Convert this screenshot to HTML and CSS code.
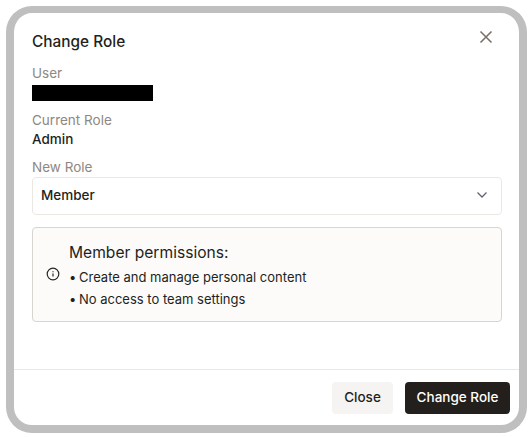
FILE: index.html
```html
<!DOCTYPE html>
<html lang="en">
<head>
  <meta charset="UTF-8">
  <title>Change Role</title>
  <link rel="stylesheet" href="styles.css">
</head>
<body>

<div class="dialog">
  <div class="dialog-body">
    <div class="dialog-head">
      <h2>Change Role</h2>
      <svg class="close-icon" width="16" height="16" viewBox="0 0 16 16" fill="none" stroke="#7a716a" stroke-width="1.6">
        <path d="M2.5 2.5l11 11M13.5 2.5l-11 11"/>
      </svg>
    </div>

    <div class="label">User</div>
    <div class="redacted"></div>

    <div class="label label-role">Current Role</div>
    <div class="value">Admin</div>

    <div class="label label-new">New Role</div>
    <div class="select">
      <span>Member</span>
      <svg width="12" height="8" viewBox="0 0 12 8" fill="none" stroke="#5f6472" stroke-width="1.3">
        <path d="M1.5 1.5L6 6l4.5-4.5"/>
      </svg>
    </div>

    <div class="info">
      <svg class="info-icon" width="14" height="14" viewBox="0 0 14 14" fill="none" stroke="#2a2522" stroke-width="1.2">
        <circle cx="7" cy="7" r="5.8"/>
        <path d="M7 6.4v3.2M7 4.2v1.1"/>
      </svg>
      <div>
        <div class="info-title">Member permissions:</div>
        <div class="info-line"><span class="bullet">•</span> Create and manage personal content</div>
        <div class="info-line"><span class="bullet">•</span> No access to team settings</div>
      </div>
    </div>
  </div>

  <div class="dialog-foot">
    <button class="btn btn-light">Close</button>
    <button class="btn btn-dark">Change Role</button>
  </div>
</div>

</body>
</html>
```

FILE: styles.css
```css
* {
  box-sizing: border-box;
}

body {
  margin: 0;
  padding: 6px 4px 4px 6px;
  background-color: #fff;
  color: #231f1c;
  font-family: Inter, "Liberation Sans", sans-serif;
}

.dialog {
  width: 521px;
  height: 427px;
  border: 8px solid #bfbfbf;
  border-top-width: 7px;
  border-radius: 26px;
  background-color: #fff;
  display: flex;
  flex-direction: column;
}

.dialog-body {
  flex: 1;
  padding: 0 17px 0 18px;
}

.dialog-head {
  display: flex;
  justify-content: space-between;
  align-items: flex-start;
  height: 51px;
  padding-top: 19px;
}

h2 {
  margin: 0;
  font-size: 15.4px;
  line-height: 19px;
  font-weight: 500;
}

.close-icon {
  margin: -3px 8px 0 0;
}

.label {
  font-size: 13.5px;
  line-height: 18px;
  color: #8f8880;
}

.label-role {
  margin-top: 10px;
}

.label-new {
  margin-top: 9px;
}

.redacted {
  width: 121px;
  height: 16px;
  margin-top: 3px;
  background-color: #000;
}

.value {
  font-size: 13.5px;
  line-height: 20px;
  font-weight: 500;
}

.select {
  height: 38px;
  margin-top: 1px;
  padding: 0 13px 2px 8px;
  border: 1px solid #ebe8e3;
  border-radius: 4px;
  display: flex;
  justify-content: space-between;
  align-items: center;
  font-size: 13.5px;
  font-weight: 500;
}

.info {
  height: 95px;
  margin-top: 12px;
  padding: 2px 13px 0;
  border: 1px solid #d8d5d0;
  border-radius: 4px;
  background-color: #fcfbf9;
  display: flex;
  align-items: center;
  gap: 9px;
}

.info-icon {
  flex: none;
  margin-top: -4px;
}

.info-title {
  font-size: 15.6px;
  line-height: 24px;
  margin-bottom: 1px;
}

.info-line {
  font-size: 13px;
  line-height: 22px;
}

.bullet {
  margin-right: -1px;
}

.dialog-foot {
  height: 56px;
  padding-top: 12px;
  border-top: 1px solid #ebe8e3;
  display: flex;
  justify-content: flex-end;
  gap: 12px;
  padding-right: 9px;
}

.btn {
  height: 32px;
  padding-bottom: 3px;
  border: none;
  border-radius: 4px;
  font-family: inherit;
  font-size: 13.5px;
  font-weight: 500;
}

.btn-light {
  width: 61px;
  background-color: #f5f4f2;
  color: #231f1c;
}

.btn-dark {
  width: 105px;
  background-color: #231f1c;
  color: #fff;
}
```
